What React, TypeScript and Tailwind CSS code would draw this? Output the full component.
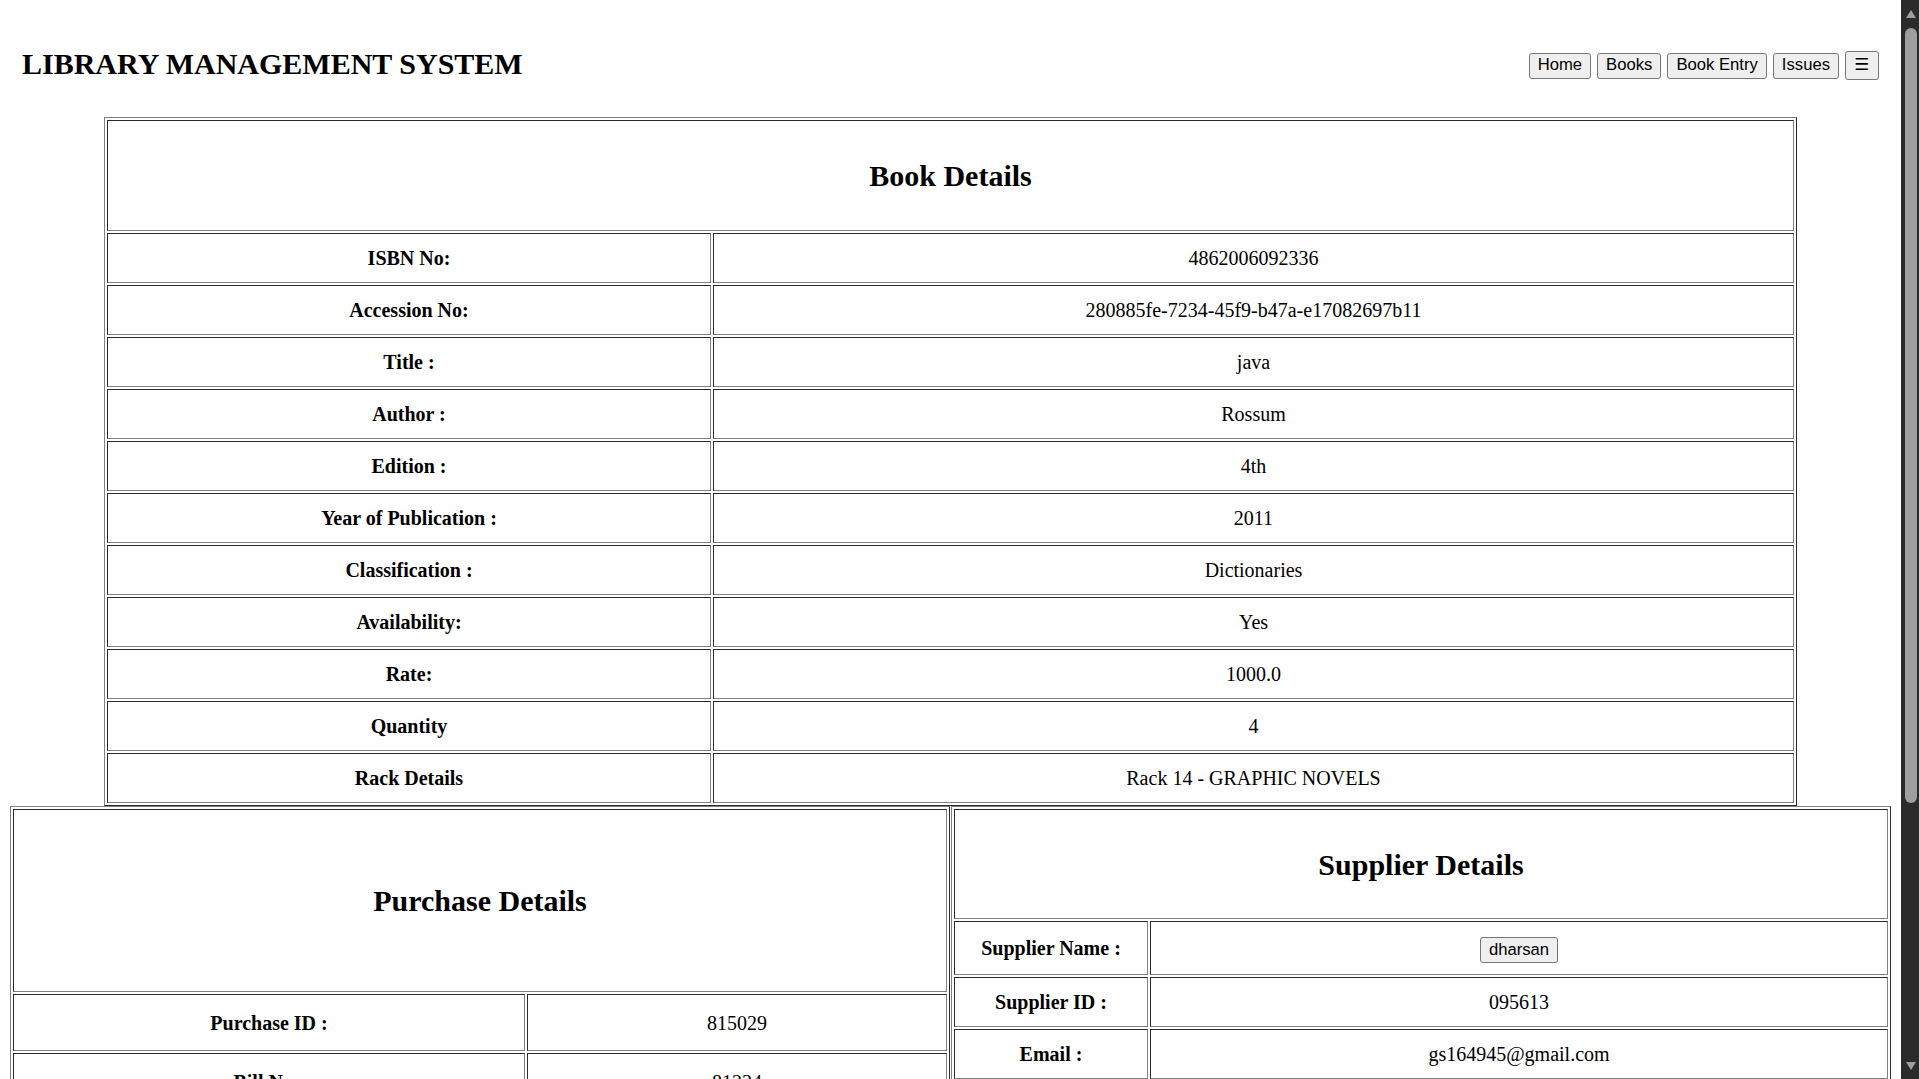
import React from "react";

const dark = "border-t-[#2a2a2a] border-l-[#2a2a2a] border-r-[#808080] border-b-[#808080]";
const tableBorder =
  "border border-solid border-t-[#808080] border-l-[#808080] border-r-[#2a2a2a] border-b-[#2a2a2a] border-separate border-spacing-[2px] table-fixed";
const cell = `border border-solid ${dark} p-px text-center align-middle`;

const bookRows: [string, string][] = [
  ["ISBN No:", "4862006092336"],
  ["Accession No:", "280885fe-7234-45f9-b47a-e17082697b11"],
  ["Title :", "java"],
  ["Author :", "Rossum"],
  ["Edition :", "4th"],
  ["Year of Publication :", "2011"],
  ["Classification :", "Dictionaries"],
  ["Availability:", "Yes"],
  ["Rate:", "1000.0"],
  ["Quantity", "4"],
  ["Rack Details", "Rack 14 - GRAPHIC NOVELS"],
];

function NavButton({ children, wide }: { children: React.ReactNode; wide?: boolean }) {
  return (
    <button
      className={`${
        wide ? "h-[29px] w-[34px]" : "h-[26px] px-[8px]"
      } rounded-[3px] border border-[#767676] bg-[#efefef] font-['Liberation_Sans','DejaVu_Sans',sans-serif] text-[16.67px] leading-none text-black`}
    >
      {children}
    </button>
  );
}

function Scrollbar() {
  return (
    <aside className="flex h-full w-[18px] shrink-0 flex-col items-center bg-[#2b2b2b]">
      <svg width="12" height="9" viewBox="0 0 12 9" className="mt-[10px] ml-[2px]">
        <polygon points="6,0 11,8 1,8" fill="#9f9f9f" />
      </svg>
      <div className="mt-[9px] ml-[2px] h-[775px] w-[12px] rounded-t-[6px] rounded-b-[6px] bg-[#9f9f9f]" />
      <div className="flex-1" />
      <svg width="12" height="9" viewBox="0 0 12 9" className="mb-[8px] ml-[2px]">
        <polygon points="1,0 11,0 6,8" fill="#9f9f9f" />
      </svg>
    </aside>
  );
}

export default function App() {
  return (
    <div className="flex h-[1079px] w-full overflow-hidden bg-white font-['Liberation_Serif',serif] text-[20px] text-black">
      <main className="h-full flex-1 overflow-hidden">
        <header className="flex h-[117px] items-start justify-between pl-[22px] pr-[22px] pt-[47px]">
          <h1 className="text-[30px] font-bold leading-[34px]">LIBRARY MANAGEMENT SYSTEM</h1>
          <nav className="mt-[4px] flex items-center gap-[6px]">
            <NavButton>Home</NavButton>
            <NavButton>Books</NavButton>
            <NavButton>Book Entry</NavButton>
            <NavButton>Issues</NavButton>
            <NavButton wide>☰</NavButton>
          </nav>
        </header>

        <table className={`mx-auto w-[1693px] ${tableBorder}`}>
          <colgroup>
            <col className="w-[604px]" />
            <col />
          </colgroup>
          <tbody>
            <tr>
              <td colSpan={2} className={`${cell} h-[111px]`}>
                <h2 className="text-[30px] font-bold">Book Details</h2>
              </td>
            </tr>
            {bookRows.map(([label, value]) => (
              <tr key={label}>
                <th className={`${cell} h-[50px] font-bold`}>{label}</th>
                <td className={`${cell} h-[50px]`}>{value}</td>
              </tr>
            ))}
          </tbody>
        </table>

        <div className="flex items-start gap-[1px] pl-[10px]">
          <table className={`w-[940px] ${tableBorder}`}>
            <colgroup>
              <col className="w-[512px]" />
              <col />
            </colgroup>
            <tbody>
              <tr>
                <td colSpan={2} className={`${cell} h-[183px]`}>
                  <h2 className="text-[30px] font-bold">Purchase Details</h2>
                </td>
              </tr>
              <tr>
                <th className={`${cell} h-[57px] font-bold`}>Purchase ID :</th>
                <td className={`${cell} h-[57px]`}>815029</td>
              </tr>
              <tr>
                <th className={`${cell} h-[57px] font-bold`}>Bill No :</th>
                <td className={`${cell} h-[57px]`}>81234</td>
              </tr>
            </tbody>
          </table>

          <table className={`w-[940px] ${tableBorder}`}>
            <colgroup>
              <col className="w-[194px]" />
              <col />
            </colgroup>
            <tbody>
              <tr>
                <td colSpan={2} className={`${cell} h-[110px]`}>
                  <h2 className="text-[30px] font-bold">Supplier Details</h2>
                </td>
              </tr>
              <tr>
                <th className={`${cell} h-[54px] font-bold`}>Supplier Name :</th>
                <td className={`${cell} h-[54px]`}>
                  <NavButton>dharsan</NavButton>
                </td>
              </tr>
              <tr>
                <th className={`${cell} h-[50px] font-bold`}>Supplier ID :</th>
                <td className={`${cell} h-[50px]`}>095613</td>
              </tr>
              <tr>
                <th className={`${cell} h-[50px] font-bold`}>Email :</th>
                <td className={`${cell} h-[50px]`}>gs164945@gmail.com</td>
              </tr>
            </tbody>
          </table>
        </div>
      </main>
      <Scrollbar />
    </div>
  );
}
